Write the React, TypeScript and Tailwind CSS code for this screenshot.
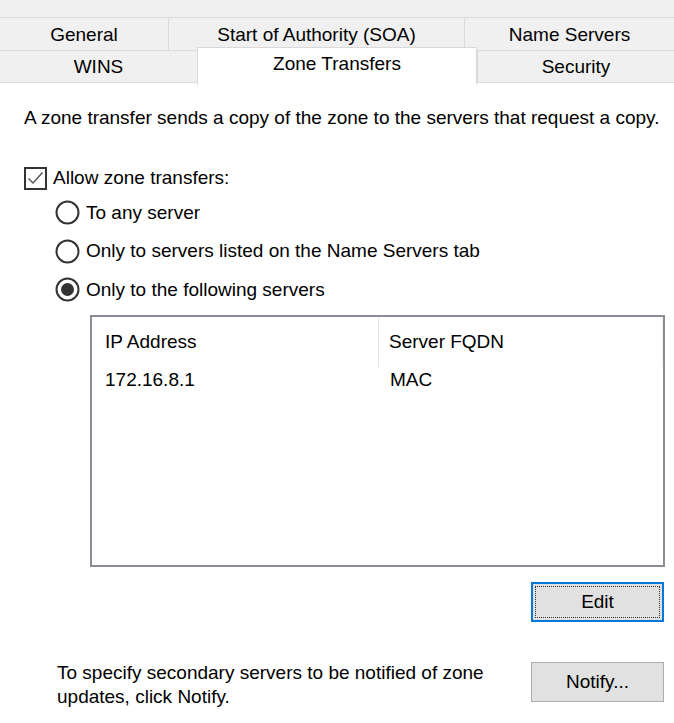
const font = { fontFamily: '"Liberation Sans", Arial, sans-serif' };

function Tab({ label, w, selected }: { label: string; w: string; selected?: boolean }) {
  if (selected) {
    return (
      <div
        className={`relative z-10 -mt-[4px] flex h-[38px] items-start justify-center border-x border-t border-[#d9d9d9] bg-white pt-[2px] ${w}`}
      >
        {label}
      </div>
    );
  }
  return (
    <div className={`flex h-full items-center justify-center pt-[2px] ${w}`}>{label}</div>
  );
}

function Radio({ label, checked }: { label: string; checked?: boolean }) {
  return (
    <div className="flex h-[38.5px] items-center gap-[6px]">
      <svg width="25" height="25" viewBox="0 0 25 25">
        <circle cx="12.5" cy="12.5" r="11" fill="white" stroke="#333" strokeWidth="2" />
        {checked && <circle cx="12.5" cy="12.5" r="6.5" fill="#333" />}
      </svg>
      <span>{label}</span>
    </div>
  );
}

export default function App() {
  return (
    <div className="h-[723px] w-[674px] overflow-hidden bg-white text-[19px] text-black" style={font}>
      <div className="h-[17px] bg-[#f0f0f0]" />

      <div className="flex h-[33px] border-t border-[#dadada] bg-[#f0f0f0]">
        <Tab label="General" w="w-[169px] border-r border-[#dadada]" />
        <Tab label="Start of Authority (SOA)" w="w-[296px] border-r border-[#dadada]" />
        <Tab label="Name Servers" w="flex-1" />
      </div>
      <div className="flex h-[33px] border-y border-[#dadada] bg-[#f0f0f0]">
        <Tab label="WINS" w="w-[197px]" />
        <Tab label="Zone Transfers" w="w-[280px]" selected />
        <Tab label="Security" w="flex-1 border-l border-[#dadada]" />
      </div>

      <p className="mt-[24px] pl-[24px] leading-[22px]">
        A zone transfer sends a copy of the zone to the servers that request a copy.
      </p>

      <div className="mt-[35px] flex items-center gap-[6px] pl-[24px]">
        <svg width="23" height="23" viewBox="0 0 23 23">
          <rect x="1" y="1" width="21" height="21" fill="white" stroke="#333" strokeWidth="2" />
          <path d="M4.5 11.5 L9 16 L18.5 5.5" fill="none" stroke="#555" strokeWidth="1.4" />
        </svg>
        <span>Allow zone transfers:</span>
      </div>

      <div className="mt-[1px] flex flex-col pl-[55px]">
        <Radio label="To any server" />
        <Radio label="Only to servers listed on the Name Servers tab" />
        <Radio label="Only to the following servers" checked />
      </div>

      <div className="ml-[90px] mt-[6px] h-[252px] w-[575px] border-2 border-[#8a8d93] bg-white">
        <div className="flex h-[50px] items-center">
          <div className="flex h-full w-[287px] items-center border-r border-[#e5e5e5] pl-[13px]">
            IP Address
          </div>
          <div className="flex h-full flex-1 items-center border-r border-[#efefef] pl-[10px]">
            Server FQDN
          </div>
        </div>
        <div className="flex h-[26px] items-center">
          <div className="w-[287px] pl-[13px]">172.16.8.1</div>
          <div className="pl-[11px]">MAC</div>
        </div>
      </div>

      <div className="mt-[15px] flex justify-end pr-[10px]">
        <button className="flex h-[40px] w-[133px] items-center justify-center border-2 border-[#0078d7] bg-[#e1e1e1] p-[2px]">
          <span className="flex h-full w-full items-center justify-center border border-dotted border-[#333]">
            Edit
          </span>
        </button>
      </div>

      <div className="mt-[40px] flex items-start justify-between pl-[57px] pr-[10px]">
        <p className="-mt-[1px] w-[450px] leading-[24px]">
          To specify secondary servers to be notified of zone updates, click Notify.
        </p>
        <button className="flex h-[40px] w-[133px] items-center justify-center border border-[#adadad] bg-[#e1e1e1]">
          Notify...
        </button>
      </div>
    </div>
  );
}
